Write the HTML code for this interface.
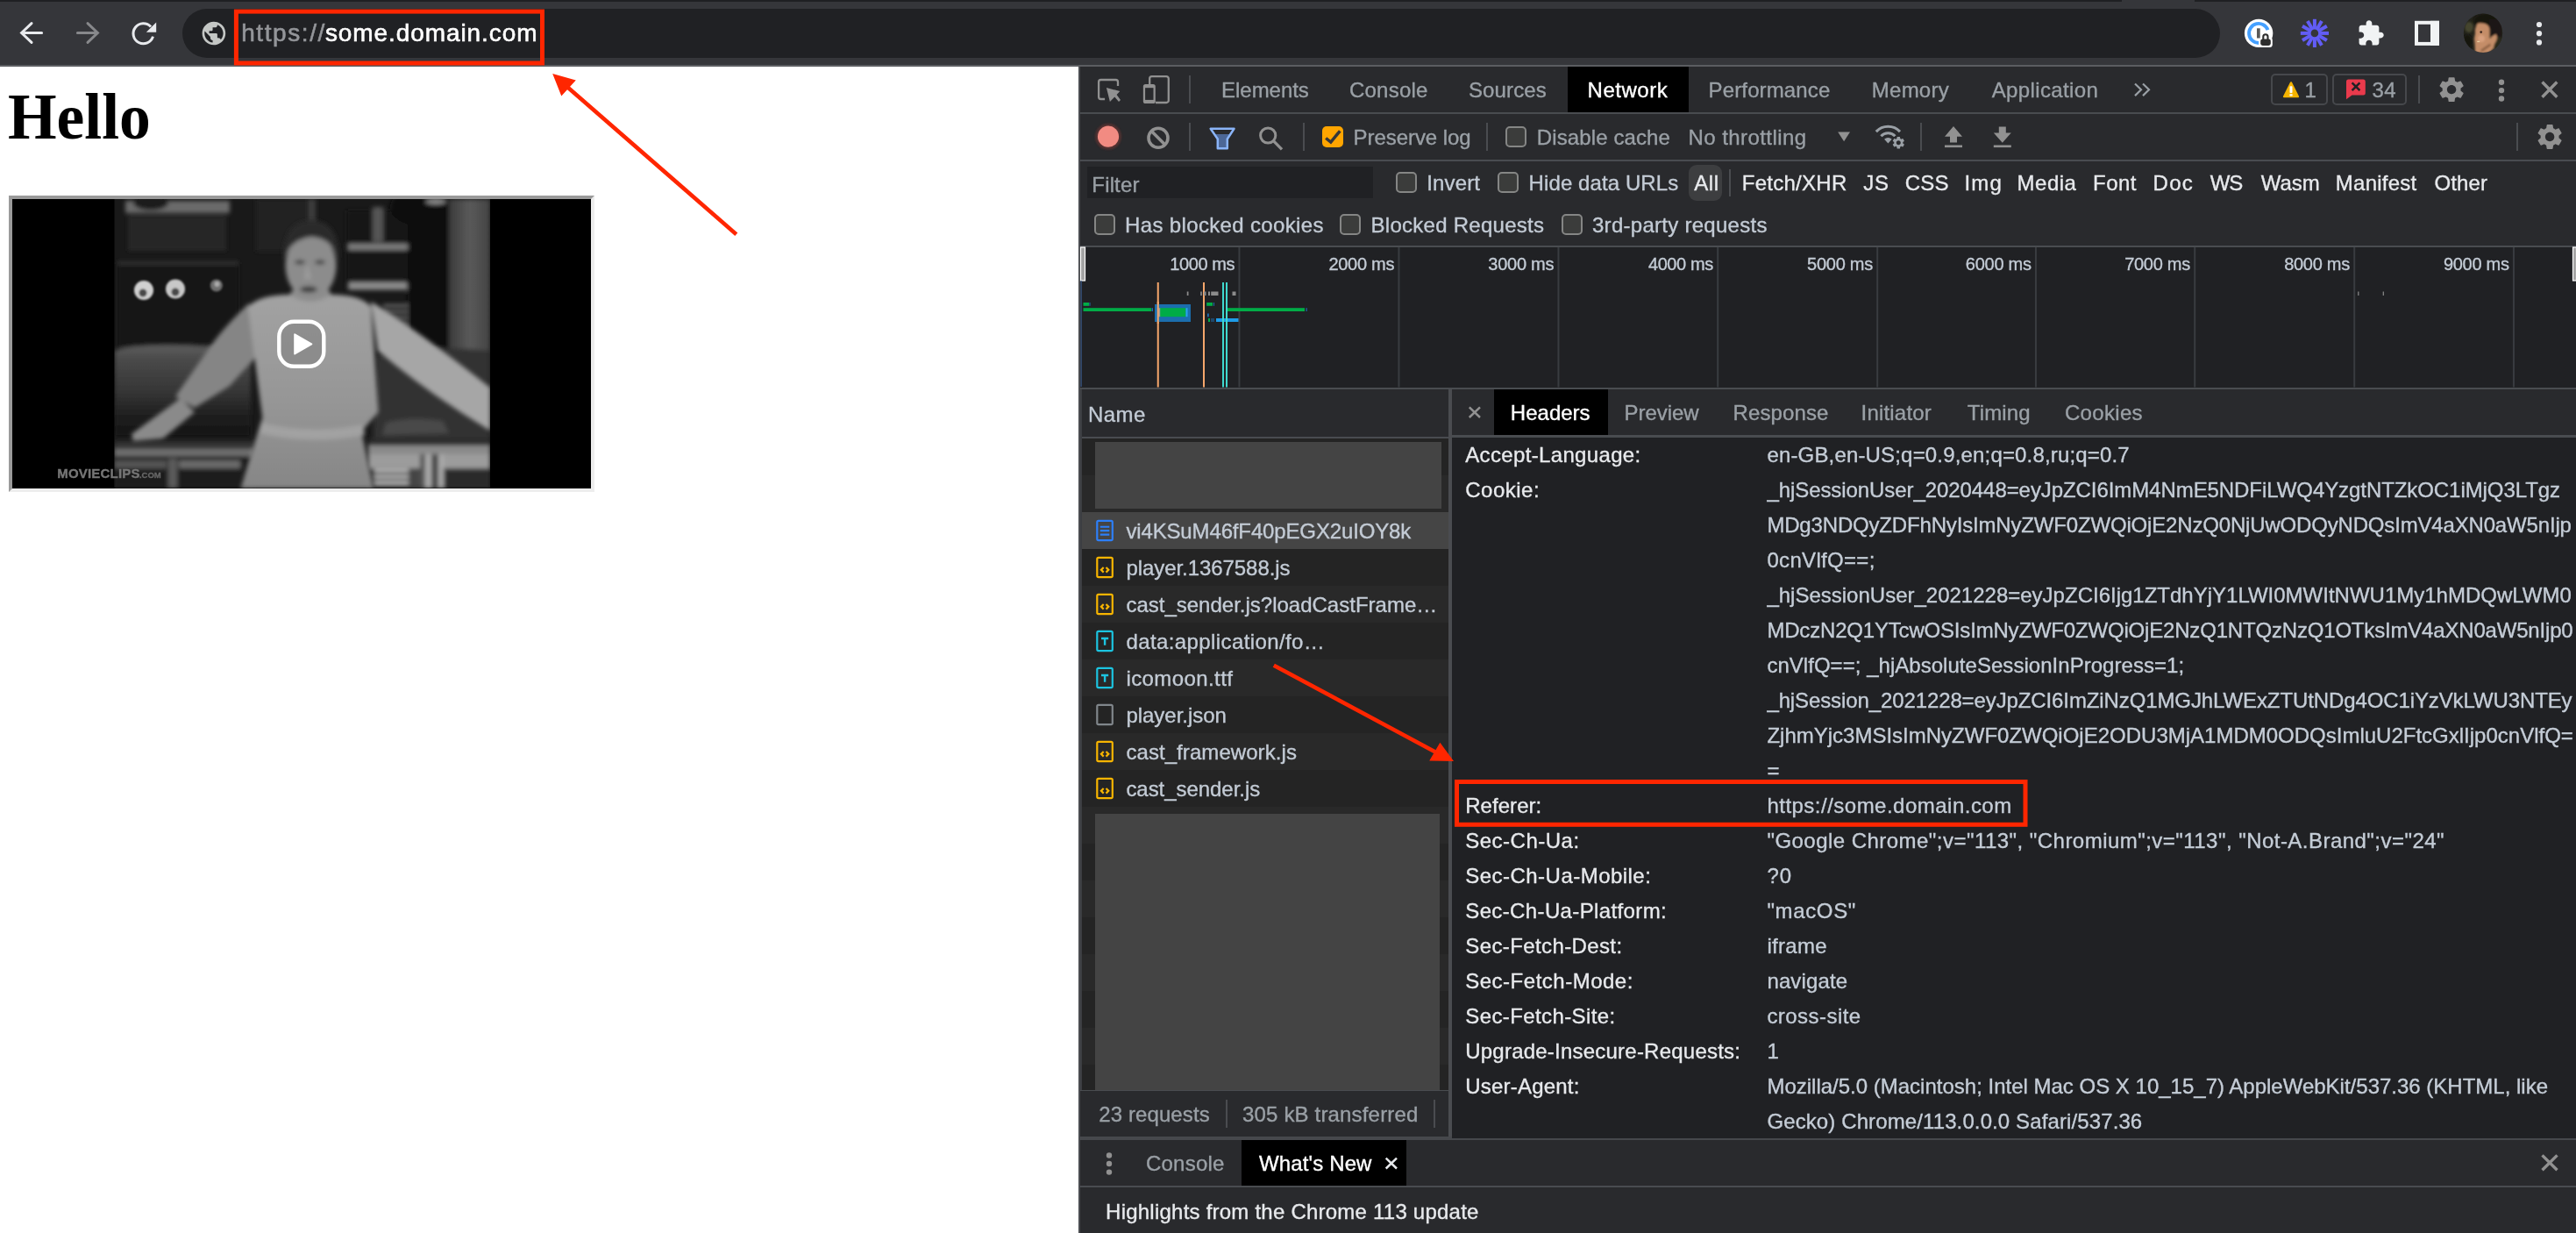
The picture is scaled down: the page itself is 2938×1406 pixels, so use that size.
<!DOCTYPE html>
<html lang="en"><head><meta charset="utf-8"><title>some.domain.com - DevTools Network</title>
<style>
*{box-sizing:border-box}
html,body{margin:0;padding:0}
body{width:2938px;height:1406px;overflow:hidden;position:relative;background:#202124;font-family:'Liberation Sans',Arial,sans-serif}
.t{position:absolute;white-space:pre;display:block}
#labels{position:absolute;left:0;top:0;width:2938px;height:1406px;will-change:transform}
.ff-s{font-family:'Liberation Sans',Arial,sans-serif;-webkit-text-stroke:0.35px currentColor}
.ff-r{font-family:'Liberation Serif','Times New Roman',serif}
.r{position:absolute}
svg{position:absolute;left:0;top:0;overflow:visible}
.cb{position:absolute;width:24px;height:24px;border:2px solid #858685;border-radius:5px;background:#3b3c3b}
.sep{position:absolute;width:2px;background:#4a4c50}
</style></head>
<body>
<header id="toolbar">
<div class="r" style="left:0px;top:0px;width:2938px;height:2px;background:#1f2023;"></div>
<div class="r" style="left:0px;top:2px;width:2938px;height:72px;background:#35363a;"></div>
<div class="r" style="left:2420px;top:0px;width:83px;height:2px;background:#35363a;"></div>
<div class="r" style="left:0px;top:74px;width:2938px;height:2px;background:#5b5d61;"></div>
<div class="r" style="left:208px;top:10px;width:2324px;height:56px;background:#202124;border-radius:28px"></div>
</header>
<main id="page">
<div class="r" style="left:0px;top:76px;width:1230px;height:1330px;background:#ffffff;"></div>
<div class="r" id="frame" style="left:10px;top:223px;width:667.5px;height:337.5px;background:#000;border-style:solid;border-width:4px;border-color:#9a9a9a #ededed #ededed #9a9a9a"></div>
</main>
<aside id="devtools">
<div class="r" style="left:1230px;top:76px;width:2px;height:1330px;background:#4a4c50;"></div>
<div class="r" style="left:1232px;top:76px;width:1706px;height:52px;background:#292a2d;"></div>
<div class="r" style="left:1788px;top:76px;width:138px;height:52px;background:#000;"></div>
<div class="r" style="left:1232px;top:128px;width:1706px;height:2px;background:#494c50;"></div>
<div class="r" style="left:1232px;top:130px;width:1706px;height:52px;background:#292a2d;"></div>
<div class="r" style="left:1232px;top:182px;width:1706px;height:2px;background:#494c50;"></div>
<div class="r" style="left:1232px;top:184px;width:1706px;height:96px;background:#292a2d;"></div>
<div class="r" style="left:1240px;top:190px;width:326px;height:36px;background:#202124;"></div>
<div class="r" style="left:1926px;top:188px;width:38px;height:41px;background:#3d3e40;border-radius:9px"></div>
<div class="r" style="left:1232px;top:280px;width:1706px;height:2px;background:#494c50;"></div>
<div class="r" style="left:1232px;top:282px;width:1706px;height:160px;background:#202124;"></div>
<div class="r" style="left:1232px;top:441.5px;width:1706px;height:2.5px;background:#494c50;"></div>
<div class="r" style="left:1232px;top:444px;width:420px;height:54px;background:#292a2d;"></div>
<div class="r" style="left:1232px;top:497.7px;width:420px;height:2.3px;background:#494c50;"></div>
<div class="r" style="left:1232px;top:499.75px;width:420px;height:42px;background:#242424;"></div>
<div class="r" style="left:1232px;top:541.75px;width:420px;height:42px;background:#292929;"></div>
<div class="r" style="left:1232px;top:583.75px;width:420px;height:42px;background:#454545;"></div>
<div class="r" style="left:1232px;top:625.75px;width:420px;height:42px;background:#242424;"></div>
<div class="r" style="left:1232px;top:667.75px;width:420px;height:42px;background:#292929;"></div>
<div class="r" style="left:1232px;top:709.75px;width:420px;height:42px;background:#242424;"></div>
<div class="r" style="left:1232px;top:751.75px;width:420px;height:42px;background:#292929;"></div>
<div class="r" style="left:1232px;top:793.75px;width:420px;height:42px;background:#242424;"></div>
<div class="r" style="left:1232px;top:835.75px;width:420px;height:42px;background:#292929;"></div>
<div class="r" style="left:1232px;top:877.75px;width:420px;height:42px;background:#242424;"></div>
<div class="r" style="left:1232px;top:919.75px;width:420px;height:42px;background:#292929;"></div>
<div class="r" style="left:1232px;top:961.75px;width:420px;height:42px;background:#242424;"></div>
<div class="r" style="left:1232px;top:1003.75px;width:420px;height:42px;background:#292929;"></div>
<div class="r" style="left:1232px;top:1045.75px;width:420px;height:42px;background:#242424;"></div>
<div class="r" style="left:1232px;top:1087.75px;width:420px;height:42px;background:#292929;"></div>
<div class="r" style="left:1232px;top:1129.75px;width:420px;height:42px;background:#242424;"></div>
<div class="r" style="left:1232px;top:1171.75px;width:420px;height:42px;background:#292929;"></div>
<div class="r" style="left:1232px;top:1213.75px;width:420px;height:28.75px;background:#242424;"></div>
<div class="r" style="left:1232px;top:444px;width:2px;height:799px;background:#3c3e42;"></div>
<div class="r" style="left:1249px;top:504px;width:394.75px;height:75.7px;background:#444444;"></div>
<div class="r" style="left:1249px;top:927.5px;width:393px;height:317px;background:#444444;"></div>
<div class="r" style="left:1232px;top:1242.5px;width:420px;height:1.8px;background:#494c50;"></div>
<div class="r" style="left:1232px;top:1244.3px;width:420px;height:51.5px;background:#292a2d;"></div>
<div class="r" style="left:1652px;top:444px;width:4.2px;height:854px;background:#4a4c50;"></div>
<div class="r" style="left:1656.2px;top:444px;width:1281.8px;height:52.2px;background:#292a2d;"></div>
<div class="r" style="left:1704px;top:444px;width:130px;height:52.2px;background:#000;"></div>
<div class="r" style="left:1656.2px;top:496.2px;width:1281.8px;height:2.5px;background:#494c50;"></div>
<div class="r" style="left:1656.2px;top:498.7px;width:1281.8px;height:799px;background:#202124;"></div>
<div class="r" style="left:1232px;top:1295.8px;width:424px;height:4.2px;background:#46484c;"></div>
<div class="r" style="left:1656px;top:1297.6px;width:1282px;height:2.4px;background:#46484c;"></div>
<div class="r" style="left:1232px;top:1300px;width:1706px;height:52px;background:#292a2d;"></div>
<div class="r" style="left:1415.75px;top:1300px;width:188px;height:52px;background:#000;"></div>
<div class="r" style="left:1232px;top:1351.8px;width:1706px;height:2px;background:#494c50;"></div>
<div class="r" style="left:1232px;top:1353.8px;width:1706px;height:53px;background:#292a2d;"></div>
<div class="sep" style="left:1356px;top:86px;height:31.6px"></div>
<div class="sep" style="left:2758px;top:86px;height:31.6px"></div>
<div class="sep" style="left:1356px;top:140.2px;height:31.4px"></div>
<div class="sep" style="left:1486px;top:140.2px;height:31.4px"></div>
<div class="sep" style="left:1695px;top:140.2px;height:31.4px"></div>
<div class="sep" style="left:2190.3px;top:140.2px;height:31.4px"></div>
<div class="sep" style="left:2870px;top:140.2px;height:31.4px"></div>
<div class="sep" style="left:1972px;top:192.5px;height:31.3px"></div>
<div class="sep" style="left:1397.8px;top:1254px;height:31.5px"></div>
<div class="sep" style="left:1634.8px;top:1254px;height:31.5px"></div>
<div class="cb" style="left:1717px;top:144.3px"></div>
<div class="cb" style="left:1592px;top:196.3px"></div>
<div class="cb" style="left:1708px;top:196.3px"></div>
<div class="cb" style="left:1248px;top:244.2px"></div>
<div class="cb" style="left:1528px;top:244.2px"></div>
<div class="cb" style="left:1781.2px;top:244.2px"></div>
<div class="r" style="left:1508px;top:144px;width:24.4px;height:24.4px;background:#ffa500;border-radius:5px"></div>
<div class="r" style="left:2590.3px;top:84.3px;width:65px;height:36.2px;border:2px solid #46484c;border-radius:5px"></div>
<div class="r" style="left:2660.3px;top:84.3px;width:85px;height:36.2px;border:2px solid #46484c;border-radius:5px"></div>
</aside>
<svg id="gfx" width="2938" height="1406" viewBox="0 0 2938 1406">
<g id="nav" fill="none" stroke-width="3" stroke-linecap="round" stroke-linejoin="miter"><path stroke="#e8eaed" d="M47.6 37.5H25M36 26.6L24.6 37.5L36 48.4"/><path stroke="#87888b" d="M88.4 37.5H111M100 26.6L111.4 37.5L100 48.4"/><path stroke="#e8eaed" stroke-linecap="butt" d="M172.05 30.6A11.5 11.5 0 1 0 174.5 41.66"/></g>
<path fill="#e8eaed" d="M178.2 25.4V36.8H166.8Z"/>
<path fill="#c4c7c5" transform="translate(227.94,22.04) scale(1.33)" d="M12 2C6.48 2 2 6.48 2 12s4.48 10 10 10 10-4.48 10-10S17.52 2 12 2zm-1 17.93c-3.95-.49-7-3.85-7-7.93 0-.62.08-1.21.21-1.79L9 15v1c0 1.1.9 2 2 2v1.93zm6.9-2.54c-.26-.81-1-1.39-1.9-1.39h-1v-3c0-.55-.45-1-1-1H8v-2h2c.55 0 1-.45 1-1V7h2c1.1 0 2-.9 2-2v-.41c2.93 1.19 5 4.06 5 7.41 0 2.08-.8 3.97-2.1 5.39z"/>
<g id="onepw"><circle cx="2576.1" cy="37.9" r="16.2" fill="#fff"/><rect x="2576.4" y="42.6" width="15.4" height="11.4" rx="3.5" fill="#fff"/><path d="M2576.1 48.95A11.05 11.05 0 1 1 2586.5 34.1" fill="none" stroke="#45a0ff" stroke-width="3.9"/><rect x="2574" y="32.3" width="3.7" height="11.2" fill="#5a5a5a"/><path d="M2581.3 45.5V41.8a2.6 2.6 0 0 1 5.2 0V45.5" fill="none" stroke="#fff" stroke-width="5"/><path d="M2581.3 45.5V41.8a2.6 2.6 0 0 1 5.2 0V45.5" fill="none" stroke="#2d2d2d" stroke-width="2.1"/><rect x="2578.2" y="44.4" width="11.6" height="7.6" rx="2.4" fill="#2d2d2d"/></g>
<g id="loom" transform="translate(2639.9,37.9)" fill="#625df5"><rect x="-2" y="-16.1" width="4" height="11" transform="rotate(0)"/><rect x="-2" y="-16.1" width="4" height="11" transform="rotate(30)"/><rect x="-2" y="-16.1" width="4" height="11" transform="rotate(60)"/><rect x="-2" y="-16.1" width="4" height="11" transform="rotate(90)"/><rect x="-2" y="-16.1" width="4" height="11" transform="rotate(120)"/><rect x="-2" y="-16.1" width="4" height="11" transform="rotate(150)"/><rect x="-2" y="-16.1" width="4" height="11" transform="rotate(180)"/><rect x="-2" y="-16.1" width="4" height="11" transform="rotate(210)"/><rect x="-2" y="-16.1" width="4" height="11" transform="rotate(240)"/><rect x="-2" y="-16.1" width="4" height="11" transform="rotate(270)"/><rect x="-2" y="-16.1" width="4" height="11" transform="rotate(300)"/><rect x="-2" y="-16.1" width="4" height="11" transform="rotate(330)"/><circle r="5.3" fill="none" stroke="#625df5" stroke-width="2"/></g>
<path fill="#f1f3f4" transform="translate(2687.9,21.96) scale(1.34)" d="M20.5 11H19V7c0-1.1-.9-2-2-2h-4V3.5C13 2.12 11.88 1 10.5 1S8 2.12 8 3.5V5H4c-1.1 0-1.99.9-1.99 2v3.8H3.5c1.49 0 2.7 1.21 2.7 2.7s-1.21 2.7-2.7 2.7H2V20c0 1.1.9 2 2 2h3.8v-1.5c0-1.49 1.21-2.7 2.7-2.7 1.49 0 2.7 1.21 2.7 2.7V22H17c1.1 0 2-.9 2-2v-4h1.5c1.38 0 2.5-1.12 2.5-2.5S21.88 11 20.5 11z"/>
<rect x="2756" y="25.8" width="24" height="24.1" fill="none" stroke="#f1f3f4" stroke-width="4"/><rect x="2772" y="23.8" width="10" height="28.1" fill="#f1f3f4"/>
<defs><clipPath id="avc"><circle cx="2832" cy="37.8" r="22.2"/></clipPath><filter id="b1" x="-20%" y="-20%" width="140%" height="140%"><feGaussianBlur stdDeviation="0.9"/></filter></defs><g clip-path="url(#avc)"><rect x="2808" y="14" width="48" height="48" fill="#23231a"/><g filter="url(#b1)"><ellipse cx="2816" cy="31" rx="5" ry="6" fill="#45452f"/><ellipse cx="2814" cy="48" rx="6" ry="9" fill="#121210"/><ellipse cx="2836" cy="24" rx="15" ry="9" fill="#16150f"/><rect x="2839" y="22" width="14" height="20" fill="#1a1712"/><ellipse cx="2849" cy="50" rx="6" ry="8" fill="#2b2a1c"/><path d="M2826 26.500Q2838 25 2839.500 33L2839.500 44Q2844 39.500 2847 39Q2849.500 44 2845 50L2843.500 56L2838 61L2823 61L2822.500 50Q2821 44 2823 38Q2822 32 2826 26.500Z" fill="#c48d68"/><ellipse cx="2830" cy="44" rx="4" ry="4" fill="#d8a07e"/><path d="M2829 57L2840 49.500L2841 52L2831 59Z" fill="#8e6244"/></g><circle cx="2829.700" cy="36.600" r="1.300" fill="#3a241c"/><rect x="2825.200" y="46.800" width="3" height="1.300" fill="#e8cfa0"/></g>
<g fill="#e8eaed"><circle cx="2896" cy="28" r="3.1"/><circle cx="2896" cy="38.2" r="3.1"/><circle cx="2896" cy="48.4" r="3.1"/></g>
<g id="dt-icons" fill="none" stroke="#919191" stroke-width="2.3"><path d="M1260.1 113H1255.6a2.5 2.5 0 0 1-2.5-2.5V93.500a2.500 2.500 0 0 1 2.500-2.500H1272.500a2.500 2.500 0 0 1 2.500 2.500V98.100"/><path d="M1311.200 96V89.600a2.500 2.500 0 0 1 2.500-2.500H1330.300a2.500 2.500 0 0 1 2.500 2.500V114.500a2.500 2.500 0 0 1-2.500 2.500H1318"/></g>
<path fill="#919191" d="M1261.900 99.900L1277.300 104.100L1273.600 108L1278 114L1276 116L1271.300 110.600L1265.900 116Z"/>
<rect x="1303.850" y="96" width="13.950" height="22.100" rx="2.600" fill="#919191"/><rect x="1306.100" y="100.200" width="9.400" height="13.700" fill="#292a2d"/>
<path d="M2435 95.5l7 6.8-7 6.8M2444 95.5l7 6.8-7 6.8" fill="none" stroke="#9aa0a6" stroke-width="2.2"/>
<path d="M2613 94.3L2621 110.2H2605Z" fill="#f5b400" stroke="#f5b400" stroke-width="2.2" stroke-linejoin="round"/><rect x="2611.500" y="98.200" width="3" height="7.800" rx=".800" fill="#fff"/><rect x="2611.300" y="107.300" width="3.400" height="2.100" rx=".600" fill="#fff"/>
<path d="M2678.5 90.5H2695.3a2.5 2.5 0 0 1 2.5 2.5V106a2.5 2.5 0 0 1-2.5 2.5H2682.5L2676 113.2V93a2.5 2.5 0 0 1 2.5-2.5Z" fill="#ea3a4c"/><path d="M2682.6 94.4l8.8 8.8M2691.400 94.4l-8.8 8.8" stroke="#202124" stroke-width="2.5" fill="none"/>
<path fill="#919191" transform="translate(2778.70,84.70) scale(1.45)" d="M19.14 12.94c.04-.3.06-.61.06-.94 0-.32-.02-.64-.07-.94l2.03-1.58c.18-.14.23-.41.12-.61l-1.92-3.32c-.12-.22-.37-.29-.59-.22l-2.39.96c-.5-.38-1.03-.7-1.62-.94l-.36-2.54c-.04-.24-.24-.41-.48-.41h-3.84c-.24 0-.43.17-.47.41l-.36 2.54c-.59.24-1.13.57-1.62.94l-2.39-.96c-.22-.08-.47 0-.59.22L2.74 8.87c-.12.21-.08.47.12.61l2.03 1.58c-.05.3-.09.63-.09.94s.02.64.07.94l-2.03 1.58c-.18.14-.23.41-.12.61l1.92 3.32c.12.22.37.29.59.22l2.39-.96c.5.38 1.03.7 1.62.94l.36 2.54c.05.24.24.41.48.41h3.84c.24 0 .44-.17.47-.41l.36-2.54c.59-.24 1.13-.56 1.62-.94l2.39.96c.22.08.47 0 .59-.22l1.92-3.32c.12-.22.07-.47-.12-.61l-2.01-1.58zM12 15.6c-1.98 0-3.6-1.62-3.6-3.6s1.62-3.6 3.6-3.6 3.6 1.62 3.6 3.6-1.62 3.6-3.6 3.6z"/>
<path fill="#919191" transform="translate(2890.70,138.60) scale(1.45)" d="M19.14 12.94c.04-.3.06-.61.06-.94 0-.32-.02-.64-.07-.94l2.03-1.58c.18-.14.23-.41.12-.61l-1.92-3.32c-.12-.22-.37-.29-.59-.22l-2.39.96c-.5-.38-1.03-.7-1.62-.94l-.36-2.54c-.04-.24-.24-.41-.48-.41h-3.84c-.24 0-.43.17-.47.41l-.36 2.54c-.59.24-1.13.57-1.62.94l-2.39-.96c-.22-.08-.47 0-.59.22L2.74 8.87c-.12.21-.08.47.12.61l2.03 1.58c-.05.3-.09.63-.09.94s.02.64.07.94l-2.03 1.58c-.18.14-.23.41-.12.61l1.92 3.32c.12.22.37.29.59.22l2.39-.96c.5.38 1.03.7 1.62.94l.36 2.54c.05.24.24.41.48.41h3.84c.24 0 .44-.17.47-.41l.36-2.54c.59-.24 1.13-.56 1.62-.94l2.39.96c.22.08.47 0 .59-.22l1.92-3.32c.12-.22.07-.47-.12-.61l-2.01-1.58zM12 15.6c-1.98 0-3.6-1.62-3.6-3.6s1.62-3.6 3.6-3.6 3.6 1.62 3.6 3.6-1.62 3.6-3.6 3.6z"/>
<g fill="#919191"><circle cx="2853" cy="93.75" r="3.2"/><circle cx="2853" cy="103.1" r="3.2"/><circle cx="2853" cy="112.5" r="3.2"/><circle cx="1265" cy="1317.5" r="3.2"/><circle cx="1265" cy="1327" r="3.2"/><circle cx="1265" cy="1336.6" r="3.2"/></g>
<g fill="none" stroke="#919191" stroke-width="3.4"><path d="M2899.5 93.5L2916.3 110.700M2916.3 93.5L2899.5 110.700"/><path d="M2899.5 1317.4L2916.5 1334.2M2916.5 1317.4L2899.5 1334.2"/><path stroke-width="2.5" d="M1675.8 464.3L1688 476M1688 464.3L1675.8 476"/></g>
<path d="M1580.7 1320.700L1593 1332.5M1593 1320.700L1580.700 1332.5" fill="none" stroke="#e8eaed" stroke-width="2.5"/>
<defs><filter id="b2" x="-50%" y="-50%" width="200%" height="200%"><feGaussianBlur stdDeviation="0.9"/></filter></defs>
<circle cx="1264" cy="155.7" r="14.8" fill="#5a3230" opacity=".9" filter="url(#b2)"/><circle cx="1264" cy="155.7" r="12.1" fill="#f28b82"/>
<g fill="none" stroke="#919191"><circle cx="1321" cy="157.2" r="11" stroke-width="3.6"/><path stroke-width="3.6" d="M1313 149.2L1329 165.2"/><circle cx="1446.2" cy="154.5" r="8.6" stroke-width="3"/><path stroke-width="3.3" d="M1452.4 160.700L1462 170.300"/></g>
<path d="M1384.5 153H1403.700L1399.800 158.500V169.300H1388.800V158.500Z" fill="#4c6796"/><path d="M1380.700 146.800H1407.500L1399.800 158.500V169.300H1388.800V158.500Z" fill="none" stroke="#8ab4f8" stroke-width="2.5" stroke-linejoin="round"/>
<path d="M1512.2 157.5L1517.800 162.100L1528.300 149.300" fill="none" stroke="#35363a" stroke-width="3.5"/>
<path d="M2096.2 150.5H2110L2103.100 161.300Z" fill="#919191"/>
<g fill="none" stroke="#9aa0a6" stroke-width="3.1"><path d="M2139.80 150.11A18.6 18.6 0 0 1 2167.00 150.11"/><path d="M2145.36 155.30A11 11 0 0 1 2161.44 155.30"/></g><path d="M2149.10 158.80a6 6 0 0 1 8.600 0l-4.300 4.600z" fill="#9aa0a6"/><circle cx="2165.300" cy="162.750" r="8.300" fill="#292a2d"/><path fill="#9aa0a6" transform="translate(2156.90,154.35) scale(.7)" d="M19.14 12.94c.04-.3.06-.61.06-.94 0-.32-.02-.64-.07-.94l2.03-1.58c.18-.14.23-.41.12-.61l-1.92-3.32c-.12-.22-.37-.29-.59-.22l-2.39.96c-.5-.38-1.03-.7-1.62-.94l-.36-2.54c-.04-.24-.24-.41-.48-.41h-3.84c-.24 0-.43.17-.47.41l-.36 2.54c-.59.24-1.13.57-1.62.94l-2.39-.96c-.22-.08-.47 0-.59.22L2.74 8.87c-.12.21-.08.47.12.61l2.03 1.58c-.05.3-.09.63-.09.94s.02.64.07.94l-2.03 1.58c-.18.14-.23.41-.12.61l1.92 3.32c.12.22.37.29.59.22l2.39-.96c.5.38 1.03.7 1.62.94l.36 2.54c.05.24.24.41.48.41h3.84c.24 0 .44-.17.47-.41l.36-2.54c.59-.24 1.13-.56 1.62-.94l2.39.96c.22.08.47 0 .59-.22l1.92-3.32c.12-.22.07-.47-.12-.61l-2.01-1.58zM12 15.6c-1.98 0-3.6-1.62-3.6-3.6s1.62-3.6 3.6-3.6 3.6 1.62 3.6 3.6-1.62 3.6-3.6 3.6z"/>
<g fill="#919191"><path d="M2228 144L2238 155.800H2232V162.600H2224V155.800H2218Z"/><rect x="2218" y="165.500" width="20" height="2.600"/><path d="M2279.800 144.600H2287.800V151.600H2293.800L2283.800 162.800L2273.800 151.600H2279.800Z"/><rect x="2273.800" y="165.500" width="20" height="2.600"/></g>
<g id="overview"><rect x="1412.45" y="282" width="2" height="159.500" fill="#393c40"/><rect x="1594.45" y="282" width="2" height="159.500" fill="#393c40"/><rect x="1776.45" y="282" width="2" height="159.500" fill="#393c40"/><rect x="1958.20" y="282" width="2" height="159.500" fill="#393c40"/><rect x="2140.20" y="282" width="2" height="159.500" fill="#393c40"/><rect x="2320.95" y="282" width="2" height="159.500" fill="#393c40"/><rect x="2502.20" y="282" width="2" height="159.500" fill="#393c40"/><rect x="2684.20" y="282" width="2" height="159.500" fill="#393c40"/><rect x="2865.95" y="282" width="2" height="159.500" fill="#393c40"/>
<rect x="1232.500" y="282" width="5" height="38" fill="#a2a2a2" stroke="#fff" stroke-width="1.2"/><rect x="2934.500" y="282" width="4" height="38" fill="#a2a2a2" stroke="#fff" stroke-width="1.2"/>
<rect x="1232.5" y="320" width="1.2" height="121" fill="#3b5a8a"/>
<rect x="1319.75" y="322" width="2" height="119.500" fill="#f5a66b"/>
<rect x="1372" y="322" width="2" height="119.500" fill="#f5a66b"/>
<rect x="1394" y="322" width="2" height="119.500" fill="#3fd9cf"/>
<rect x="1398" y="322" width="2" height="119.500" fill="#3fd9cf"/>
<rect x="1353.75" y="332.500" width="1.75" height="4.500" fill="#8c8c8c"/>
<rect x="1369.2" y="332.500" width="1.60" height="4.500" fill="#8c8c8c"/>
<rect x="1373" y="332.500" width="2.50" height="4.500" fill="#8c8c8c"/>
<rect x="1378" y="332.500" width="2.00" height="4.500" fill="#8c8c8c"/>
<rect x="1381.2" y="332.500" width="8.30" height="4.500" fill="#8c8c8c"/>
<rect x="1405.5" y="332.500" width="4.00" height="4.500" fill="#8c8c8c"/>
<rect x="2689.2" y="332.500" width="1.20" height="4.500" fill="#8c8c8c"/>
<rect x="2717.7" y="332.500" width="1.20" height="4.500" fill="#8c8c8c"/>
<rect x="1235.5" y="345" width="6.500" height="3.800" fill="#00ac47"/><rect x="1242.500" y="345" width="1" height="3.800" fill="#1f6fb0"/><rect x="1235.5" y="351.200" width="77.500" height="3.800" fill="#00ac47"/><rect x="1313.500" y="351.200" width="1.500" height="3.800" fill="#1f6fb0"/><rect x="1317" y="347" width="41" height="20" fill="#1b6eae"/><rect x="1323" y="351.200" width="29.500" height="10" fill="#00ac47"/><rect x="1352.500" y="351.200" width="2" height="10" fill="#29a4ef"/><rect x="1321.200" y="351.200" width="2" height="10" fill="#9b9b9b"/><rect x="1376.200" y="345" width="6.800" height="3.800" fill="#00ac47"/><rect x="1384" y="345" width="1" height="3.800" fill="#1f6fb0"/><rect x="1400" y="351.200" width="88" height="3.800" fill="#00ac47"/><rect x="1489.500" y="351.200" width="1.200" height="3.800" fill="#1f6fb0"/><rect x="1377" y="357.500" width="1.800" height="3.800" fill="#1f6fb0"/><rect x="1378" y="363" width="2" height="4" fill="#00ac47"/><rect x="1381.500" y="363" width="1" height="4" fill="#1f6fb0"/><rect x="1383.500" y="363" width="1" height="4" fill="#1f6fb0"/><rect x="1387" y="363" width="25.500" height="4" fill="#1e9ce8"/>
<rect x="1319.75" y="344" width="2" height="25" fill="#f5a66b"/>
<rect x="1372" y="344" width="2" height="25" fill="#f5a66b"/>
<rect x="1394" y="344" width="2" height="25" fill="#3fd9cf"/>
<rect x="1398" y="344" width="2" height="25" fill="#3fd9cf"/>
</g>
<g fill="none" stroke="#2d7ff9" stroke-width="2.2"><rect x="1251.300" y="593.85" width="17.500" height="22.300" rx="1.600"/><path d="M1254.800 600.75H1265.300M1254.800 605.15H1265.300M1254.800 609.55H1265.300"/></g>
<g fill="none" stroke="#f8b500" stroke-width="2.2"><rect x="1251.300" y="635.85" width="17.500" height="22.300" rx="1.600"/><path stroke-width="2.200" d="M1258.700 647.05l-2.800 2.800 2.800 2.800M1261.500 647.05l2.800 2.800-2.800 2.800"/></g>
<g fill="none" stroke="#f8b500" stroke-width="2.2"><rect x="1251.300" y="677.85" width="17.500" height="22.300" rx="1.600"/><path stroke-width="2.200" d="M1258.700 689.05l-2.800 2.800 2.800 2.800M1261.500 689.05l2.800 2.800-2.800 2.800"/></g>
<g fill="none" stroke="#1cc4e0" stroke-width="2.2"><rect x="1251.300" y="719.85" width="17.500" height="22.300" rx="1.600"/><path stroke-width="2.400" d="M1256 727.95H1264.200M1260.100 727.95V735.75"/></g>
<g fill="none" stroke="#1cc4e0" stroke-width="2.2"><rect x="1251.300" y="761.85" width="17.500" height="22.300" rx="1.600"/><path stroke-width="2.400" d="M1256 769.95H1264.200M1260.100 769.95V777.75"/></g>
<g fill="none" stroke="#80868b" stroke-width="2.2"><rect x="1251.300" y="803.85" width="17.500" height="22.300" rx="1.600"/></g>
<g fill="none" stroke="#f8b500" stroke-width="2.2"><rect x="1251.300" y="845.85" width="17.500" height="22.300" rx="1.600"/><path stroke-width="2.200" d="M1258.700 857.05l-2.800 2.800 2.800 2.800M1261.500 857.05l2.800 2.800-2.800 2.800"/></g>
<g fill="none" stroke="#f8b500" stroke-width="2.2"><rect x="1251.300" y="887.85" width="17.500" height="22.300" rx="1.600"/><path stroke-width="2.200" d="M1258.700 899.05l-2.800 2.800 2.800 2.800M1261.500 899.05l2.800 2.800-2.800 2.800"/></g>
<defs><clipPath id="vc"><rect x="130.5" y="227" width="428.5" height="329.5"/></clipPath>
<filter id="b3" x="-10%" y="-10%" width="120%" height="120%"><feGaussianBlur stdDeviation="2.4"/></filter>
<filter id="b4" x="-10%" y="-10%" width="120%" height="120%"><feGaussianBlur stdDeviation="1.3"/></filter>
<filter id="b5" x="-10%" y="-10%" width="120%" height="120%"><feGaussianBlur stdDeviation="5"/></filter>
<linearGradient id="gown" x1="0" y1="0" x2="0" y2="1"><stop offset="0" stop-color="#a2a2a2"/><stop offset=".55" stop-color="#969696"/><stop offset="1" stop-color="#868686"/></linearGradient>
<linearGradient id="curt" x1="0" y1="0" x2="1" y2="0"><stop offset="0" stop-color="#3a3a3a"/><stop offset=".5" stop-color="#5a5a5a"/><stop offset="1" stop-color="#444"/></linearGradient>
<linearGradient id="mound" x1="0" y1="0" x2="0" y2="1"><stop offset="0" stop-color="#5e5e5e"/><stop offset=".15" stop-color="#4a4a4a"/><stop offset=".5" stop-color="#363636"/><stop offset=".8" stop-color="#1c1c1c"/><stop offset="1" stop-color="#161616"/></linearGradient></defs>
<g id="thumb" clip-path="url(#vc)">
<rect x="130" y="227" width="430" height="330" fill="#191919"/>
<g filter="url(#b3)">
<rect x="143" y="229" width="119" height="14" fill="#6a6a6a"/><ellipse cx="172" cy="231" rx="20" ry="9" fill="#1c1c1c"/>
<rect x="146" y="246" width="112" height="40" fill="#252525"/>
<rect x="134" y="300" width="138" height="96" fill="#161616"/><rect x="134" y="298" width="138" height="4" fill="#303030"/>
<rect x="292" y="227" width="60" height="60" fill="#242424"/>
<rect x="352" y="227" width="8" height="40" fill="#3c3c3c"/>
<rect x="395" y="240" width="70" height="90" fill="#141414"/>
<rect x="397" y="278" width="68" height="7" fill="#7c7c7c"/><rect x="398" y="322" width="66" height="8.500" fill="#8c8c8c"/>
<rect x="425" y="236" width="12" height="40" fill="#555"/>
<path d="M437 347h39v3h-39zM437 354h39v3h-39zM437 361h39v3h-39zM437 368h39v3h-39zM437 375h39v3h-39zM437 382h39v3h-39z" fill="#767676"/>
<ellipse cx="482" cy="236" rx="37" ry="22" fill="#0c0c0c"/><ellipse cx="497" cy="230" rx="12" ry="3" fill="#8a8a8a"/>
<rect x="465" y="250" width="48" height="170" fill="#0d0d0d"/>
<rect x="512" y="227" width="47" height="190" fill="url(#curt)"/>
<path d="M130.500 400 Q150 392 215 394 L286 398 L286 498 L130.500 498Z" fill="url(#mound)"/>
<path d="M430 405 Q480 392 559 400 L559 500 L425 500Z" fill="#303030"/>
<path d="M440 482 Q470 474 505 480 L512 494 L436 496Z" fill="#484848"/>
<rect x="130" y="503" width="160" height="9" fill="#333"/><rect x="130" y="512" width="160" height="8.500" fill="#707070"/>
<rect x="130" y="520.500" width="160" height="36" fill="#1f1f1f"/>
<rect x="130" y="525" width="60" height="9" fill="#555"/><rect x="204" y="525" width="70" height="9" fill="#6a6a6a"/>
<rect x="192" y="523" width="10" height="34" fill="#5c5c5c"/>
<rect x="420" y="500" width="139" height="8" fill="#2c2c2c"/><rect x="420" y="508" width="139" height="10" fill="#8a8a8a"/>
<rect x="420" y="518" width="139" height="16" fill="#9c9c9c"/>
<rect x="420" y="534" width="139" height="23" fill="#2c2c2c"/>
<rect x="479" y="518" width="6" height="39" fill="#555"/><rect x="485" y="518" width="7" height="39" fill="#aaa"/><rect x="492" y="518" width="8" height="39" fill="#444"/><rect x="500" y="518" width="6" height="39" fill="#aaa"/>
<rect x="466" y="534" width="13" height="23" fill="#444"/>
<path d="M427 535h39v3.500h-39zM427 542h39v3.500h-39zM427 549h39v3.500h-39z" fill="#c8c8c8"/>
</g>
<g filter="url(#b4)">
<circle cx="164" cy="331" r="11" fill="#d0d0d0"/><circle cx="163" cy="334" r="4.500" fill="#4a4a4a"/>
<circle cx="200" cy="329.500" r="11" fill="#c8c8c8"/><circle cx="200" cy="333" r="4.500" fill="#4a4a4a"/>
<circle cx="246.800" cy="325.500" r="7" fill="#6e6e6e"/><circle cx="247.500" cy="324" r="3" fill="#aaa"/>
</g>
<g filter="url(#b3)">
<path d="M423 344 Q470 372 559 442 L559 491 Q490 450 431 400Z" fill="#a6a6a6"/>
<path d="M284 346 Q256 372 240 395 L200 452 L222 465 L262 440 L298 400Z" fill="#858585"/>
<path d="M206 454 L150 495 L152 503 L186 500 L222 470Z" fill="#8a8a8a"/>
<path d="M282.700 350 Q296 336 330 336 L378 336 Q412 336 423.300 350 L431.600 470 L412.300 492 L426 557 L274.400 557 L299.200 476 Z" fill="url(#gown)"/>
<path d="M298 482 Q355 496 414 484 L416 496 Q355 508 296 494Z" fill="#a2a2a2"/>
<path d="M330 336 Q354 352 378 336 L372 326 L338 326Z" fill="#8e8e8e"/>
<ellipse cx="354.500" cy="303" rx="29" ry="38" fill="#8c8c8c"/>
<path d="M323 296 Q322 252 356 251 Q388 253 387 298 Q380 272 356 270 Q332 272 323 296Z" fill="#2a2a2a"/>
<ellipse cx="352" cy="330" rx="10" ry="3.500" fill="#3a3a3a"/>
<ellipse cx="342" cy="299" rx="6" ry="2.500" fill="#3c3c3c"/><ellipse cx="365" cy="299" rx="6" ry="2.500" fill="#3c3c3c"/>
<path d="M350 300l-3 18h8z" fill="#9c9c9c"/>
</g>
</g>
<g id="play"><rect x="318.300" y="366.800" width="51" height="51" rx="17" fill="rgba(40,40,40,.13)" stroke="#fff" stroke-width="4.400"/><path d="M336.200 381.300L355.300 392.400L336.200 403.500Z" fill="#fff" stroke="#fff" stroke-width="2" stroke-linejoin="round"/></g>
</svg>
<div id="labels">
<span class="t ff-s" style="left:275.20px;top:17.00px;font-size:28px;line-height:42px;color:#94969a;letter-spacing:1.591px;-webkit-text-stroke:0.6px currentColor;">https://</span>
<span class="t ff-s" style="left:370.96px;top:17.00px;font-size:28px;line-height:42px;color:#ffffff;letter-spacing:0.910px;-webkit-text-stroke:0.6px currentColor;">some.domain.com</span>
<span class="t ff-s" style="left:1393.10px;top:85.00px;font-size:24px;line-height:36px;color:#9aa0a6;letter-spacing:-0.043px;">Elements</span>
<span class="t ff-s" style="left:1538.97px;top:85.00px;font-size:24px;line-height:36px;color:#9aa0a6;letter-spacing:0.221px;">Console</span>
<span class="t ff-s" style="left:1674.88px;top:85.00px;font-size:24px;line-height:36px;color:#9aa0a6;letter-spacing:0.153px;">Sources</span>
<span class="t ff-s" style="left:1948.60px;top:85.00px;font-size:24px;line-height:36px;color:#9aa0a6;letter-spacing:0.133px;">Performance</span>
<span class="t ff-s" style="left:2134.85px;top:85.00px;font-size:24px;line-height:36px;color:#9aa0a6;letter-spacing:0.232px;">Memory</span>
<span class="t ff-s" style="left:2271.76px;top:85.00px;font-size:24px;line-height:36px;color:#9aa0a6;letter-spacing:0.361px;">Application</span>
<span class="t ff-s" style="left:1810.60px;top:85.00px;font-size:24px;line-height:36px;color:#ffffff;letter-spacing:0.513px;">Network</span>
<span class="t ff-s" style="left:2628.45px;top:85.00px;font-size:24px;line-height:36px;color:#9aa0a6;">1</span>
<span class="t ff-s" style="left:2705.50px;top:85.00px;font-size:24px;line-height:36px;color:#9aa0a6;letter-spacing:0.345px;">34</span>
<span class="t ff-s" style="left:1543.60px;top:139.00px;font-size:24px;line-height:36px;color:#9aa0a6;letter-spacing:-0.061px;">Preserve log</span>
<span class="t ff-s" style="left:1752.85px;top:139.00px;font-size:24px;line-height:36px;color:#9aa0a6;letter-spacing:0.108px;">Disable cache</span>
<span class="t ff-s" style="left:1925.60px;top:139.00px;font-size:24px;line-height:36px;color:#9aa0a6;letter-spacing:0.420px;">No throttling</span>
<span class="t ff-s" style="left:1245.35px;top:193.00px;font-size:24px;line-height:36px;color:#9aa0a6;letter-spacing:0.152px;">Filter</span>
<span class="t ff-s" style="left:1627.27px;top:191.00px;font-size:24px;line-height:36px;color:#c3cbd5;letter-spacing:0.137px;">Invert</span>
<span class="t ff-s" style="left:1743.60px;top:191.00px;font-size:24px;line-height:36px;color:#c3cbd5;letter-spacing:0.090px;">Hide data URLs</span>
<span class="t ff-s" style="left:1932.26px;top:191.00px;font-size:24px;line-height:36px;color:#e8eaed;letter-spacing:0.520px;">All</span>
<span class="t ff-s" style="left:1986.85px;top:191.00px;font-size:24px;line-height:36px;color:#e8eaed;letter-spacing:0.250px;">Fetch/XHR</span>
<span class="t ff-s" style="left:2125.30px;top:191.00px;font-size:24px;line-height:36px;color:#e8eaed;letter-spacing:0.588px;">JS</span>
<span class="t ff-s" style="left:2172.72px;top:191.00px;font-size:24px;line-height:36px;color:#e8eaed;letter-spacing:0.163px;">CSS</span>
<span class="t ff-s" style="left:2240.52px;top:191.00px;font-size:24px;line-height:36px;color:#e8eaed;letter-spacing:1.124px;">Img</span>
<span class="t ff-s" style="left:2300.60px;top:191.00px;font-size:24px;line-height:36px;color:#e8eaed;letter-spacing:0.472px;">Media</span>
<span class="t ff-s" style="left:2387.10px;top:191.00px;font-size:24px;line-height:36px;color:#e8eaed;letter-spacing:0.451px;">Font</span>
<span class="t ff-s" style="left:2455.60px;top:191.00px;font-size:24px;line-height:36px;color:#e8eaed;letter-spacing:1.233px;">Doc</span>
<span class="t ff-s" style="left:2520.76px;top:191.00px;font-size:24px;line-height:36px;color:#e8eaed;letter-spacing:-1.240px;">WS</span>
<span class="t ff-s" style="left:2578.76px;top:191.00px;font-size:24px;line-height:36px;color:#e8eaed;letter-spacing:-0.058px;">Wasm</span>
<span class="t ff-s" style="left:2663.85px;top:191.00px;font-size:24px;line-height:36px;color:#e8eaed;letter-spacing:0.244px;">Manifest</span>
<span class="t ff-s" style="left:2776.51px;top:191.00px;font-size:24px;line-height:36px;color:#e8eaed;letter-spacing:0.115px;">Other</span>
<span class="t ff-s" style="left:1283.10px;top:239.00px;font-size:24px;line-height:36px;color:#c3cbd5;letter-spacing:0.344px;">Has blocked cookies</span>
<span class="t ff-s" style="left:1563.60px;top:239.00px;font-size:24px;line-height:36px;color:#c3cbd5;letter-spacing:0.262px;">Blocked Requests</span>
<span class="t ff-s" style="left:1816.00px;top:239.00px;font-size:24px;line-height:36px;color:#c3cbd5;letter-spacing:0.273px;">3rd-party requests</span>
<span class="t ff-s" style="left:1334.36px;top:286.00px;font-size:20px;line-height:30px;color:#c3cbd5;letter-spacing:-0.424px;">1000 ms</span>
<span class="t ff-s" style="left:1515.40px;top:286.00px;font-size:20px;line-height:30px;color:#c3cbd5;letter-spacing:-0.264px;">2000 ms</span>
<span class="t ff-s" style="left:1697.35px;top:286.00px;font-size:20px;line-height:30px;color:#c3cbd5;letter-spacing:-0.256px;">3000 ms</span>
<span class="t ff-s" style="left:1879.91px;top:286.00px;font-size:20px;line-height:30px;color:#c3cbd5;letter-spacing:-0.392px;">4000 ms</span>
<span class="t ff-s" style="left:2061.11px;top:286.00px;font-size:20px;line-height:30px;color:#c3cbd5;letter-spacing:-0.258px;">5000 ms</span>
<span class="t ff-s" style="left:2241.87px;top:286.00px;font-size:20px;line-height:30px;color:#c3cbd5;letter-spacing:-0.259px;">6000 ms</span>
<span class="t ff-s" style="left:2423.14px;top:286.00px;font-size:20px;line-height:30px;color:#c3cbd5;letter-spacing:-0.262px;">7000 ms</span>
<span class="t ff-s" style="left:2605.15px;top:286.00px;font-size:20px;line-height:30px;color:#c3cbd5;letter-spacing:-0.264px;">8000 ms</span>
<span class="t ff-s" style="left:2786.90px;top:286.00px;font-size:20px;line-height:30px;color:#c3cbd5;letter-spacing:-0.263px;">9000 ms</span>
<span class="t ff-s" style="left:1241.10px;top:455.00px;font-size:24px;line-height:36px;color:#c3cbd5;letter-spacing:0.400px;">Name</span>
<span class="t ff-s" style="left:1722.85px;top:453.00px;font-size:24px;line-height:36px;color:#ffffff;letter-spacing:0.007px;">Headers</span>
<span class="t ff-s" style="left:1852.60px;top:453.00px;font-size:24px;line-height:36px;color:#9aa0a6;letter-spacing:-0.070px;">Preview</span>
<span class="t ff-s" style="left:1976.60px;top:453.00px;font-size:24px;line-height:36px;color:#9aa0a6;letter-spacing:0.100px;">Response</span>
<span class="t ff-s" style="left:2122.52px;top:453.00px;font-size:24px;line-height:36px;color:#9aa0a6;letter-spacing:0.201px;">Initiator</span>
<span class="t ff-s" style="left:2243.85px;top:453.00px;font-size:24px;line-height:36px;color:#9aa0a6;letter-spacing:0.134px;">Timing</span>
<span class="t ff-s" style="left:2354.97px;top:453.00px;font-size:24px;line-height:36px;color:#9aa0a6;letter-spacing:0.320px;">Cookies</span>
<span class="t ff-s" style="left:1284.40px;top:588.00px;font-size:24px;line-height:36px;color:#c3cbd5;letter-spacing:-0.143px;">vi4KSuM46fF40pEGX2uIOY8k</span>
<span class="t ff-s" style="left:1284.40px;top:630.00px;font-size:24px;line-height:36px;color:#c3cbd5;letter-spacing:-0.061px;">player.1367588.js</span>
<span class="t ff-s" style="left:1284.40px;top:672.00px;font-size:24px;line-height:36px;color:#c3cbd5;">cast_sender.js?loadCastFrame…</span>
<span class="t ff-s" style="left:1284.40px;top:714.00px;font-size:24px;line-height:36px;color:#c3cbd5;letter-spacing:0.401px;">data:application/fo…</span>
<span class="t ff-s" style="left:1284.40px;top:756.00px;font-size:24px;line-height:36px;color:#c3cbd5;letter-spacing:0.415px;">icomoon.ttf</span>
<span class="t ff-s" style="left:1284.40px;top:798.00px;font-size:24px;line-height:36px;color:#c3cbd5;letter-spacing:-0.024px;">player.json</span>
<span class="t ff-s" style="left:1284.40px;top:840.00px;font-size:24px;line-height:36px;color:#c3cbd5;letter-spacing:0.070px;">cast_framework.js</span>
<span class="t ff-s" style="left:1284.40px;top:882.00px;font-size:24px;line-height:36px;color:#c3cbd5;letter-spacing:-0.048px;">cast_sender.js</span>
<span class="t ff-s" style="left:1671.25px;top:501.00px;font-size:24px;line-height:36px;color:#e8eaed;letter-spacing:0.343px;">Accept-Language:</span>
<span class="t ff-s" style="left:1671.25px;top:541.00px;font-size:24px;line-height:36px;color:#e8eaed;letter-spacing:0.493px;">Cookie:</span>
<span class="t ff-s" style="left:1671.25px;top:901.00px;font-size:24px;line-height:36px;color:#e8eaed;letter-spacing:0.041px;">Referer:</span>
<span class="t ff-s" style="left:1671.25px;top:941.00px;font-size:24px;line-height:36px;color:#e8eaed;letter-spacing:0.495px;">Sec-Ch-Ua:</span>
<span class="t ff-s" style="left:1671.25px;top:981.00px;font-size:24px;line-height:36px;color:#e8eaed;letter-spacing:0.472px;">Sec-Ch-Ua-Mobile:</span>
<span class="t ff-s" style="left:1671.25px;top:1021.00px;font-size:24px;line-height:36px;color:#e8eaed;letter-spacing:0.377px;">Sec-Ch-Ua-Platform:</span>
<span class="t ff-s" style="left:1671.25px;top:1061.00px;font-size:24px;line-height:36px;color:#e8eaed;letter-spacing:0.390px;">Sec-Fetch-Dest:</span>
<span class="t ff-s" style="left:1671.25px;top:1101.00px;font-size:24px;line-height:36px;color:#e8eaed;letter-spacing:0.504px;">Sec-Fetch-Mode:</span>
<span class="t ff-s" style="left:1671.25px;top:1141.00px;font-size:24px;line-height:36px;color:#e8eaed;letter-spacing:0.390px;">Sec-Fetch-Site:</span>
<span class="t ff-s" style="left:1671.25px;top:1181.00px;font-size:24px;line-height:36px;color:#e8eaed;letter-spacing:0.222px;">Upgrade-Insecure-Requests:</span>
<span class="t ff-s" style="left:1671.25px;top:1221.00px;font-size:24px;line-height:36px;color:#e8eaed;letter-spacing:0.206px;">User-Agent:</span>
<span class="t ff-s" style="left:2015.40px;top:501.00px;font-size:24px;line-height:36px;color:#c5cdd7;letter-spacing:0.167px;">en-GB,en-US;q=0.9,en;q=0.8,ru;q=0.7</span>
<span class="t ff-s" style="left:2015.40px;top:541.00px;font-size:24px;line-height:36px;color:#c5cdd7;letter-spacing:-0.072px;">_hjSessionUser_2020448=eyJpZCI6ImM4NmE5NDFiLWQ4YzgtNTZkOC1iMjQ3LTgz</span>
<span class="t ff-s" style="left:2015.40px;top:581.00px;font-size:24px;line-height:36px;color:#c5cdd7;letter-spacing:-0.171px;">MDg3NDQyZDFhNyIsImNyZWF0ZWQiOjE2NzQ0NjUwODQyNDQsImV4aXN0aW5nIjp</span>
<span class="t ff-s" style="left:2015.40px;top:621.00px;font-size:24px;line-height:36px;color:#c5cdd7;letter-spacing:0.322px;">0cnVlfQ==;</span>
<span class="t ff-s" style="left:2015.40px;top:661.00px;font-size:24px;line-height:36px;color:#c5cdd7;">_hjSessionUser_2021228=eyJpZCI6Ijg1ZTdhYjY1LWI0MWItNWU1My1hMDQwLWM0</span>
<span class="t ff-s" style="left:2015.40px;top:701.00px;font-size:24px;line-height:36px;color:#c5cdd7;letter-spacing:-0.183px;">MDczN2Q1YTcwOSIsImNyZWF0ZWQiOjE2NzQ1NTQzNzQ1OTksImV4aXN0aW5nIjp0</span>
<span class="t ff-s" style="left:2015.40px;top:741.00px;font-size:24px;line-height:36px;color:#c5cdd7;letter-spacing:0.035px;">cnVlfQ==; _hjAbsoluteSessionInProgress=1;</span>
<span class="t ff-s" style="left:2015.40px;top:781.00px;font-size:24px;line-height:36px;color:#c5cdd7;letter-spacing:-0.109px;">_hjSession_2021228=eyJpZCI6ImZiNzQ1MGJhLWExZTUtNDg4OC1iYzVkLWU3NTEy</span>
<span class="t ff-s" style="left:2015.40px;top:821.00px;font-size:24px;line-height:36px;color:#c5cdd7;">ZjhmYjc3MSIsImNyZWF0ZWQiOjE2ODU3MjA1MDM0ODQsImluU2FtcGxlIjp0cnVlfQ=</span>
<span class="t ff-s" style="left:2015.40px;top:861.00px;font-size:24px;line-height:36px;color:#c5cdd7;">=</span>
<span class="t ff-s" style="left:2015.40px;top:901.00px;font-size:24px;line-height:36px;color:#c5cdd7;letter-spacing:0.486px;">https://some.domain.com</span>
<span class="t ff-s" style="left:2015.40px;top:941.00px;font-size:24px;line-height:36px;color:#c5cdd7;letter-spacing:0.466px;">"Google Chrome";v="113", "Chromium";v="113", "Not-A.Brand";v="24"</span>
<span class="t ff-s" style="left:2015.40px;top:981.00px;font-size:24px;line-height:36px;color:#c5cdd7;letter-spacing:1.096px;">?0</span>
<span class="t ff-s" style="left:2015.40px;top:1021.00px;font-size:24px;line-height:36px;color:#c5cdd7;letter-spacing:0.652px;">"macOS"</span>
<span class="t ff-s" style="left:2015.40px;top:1061.00px;font-size:24px;line-height:36px;color:#c5cdd7;letter-spacing:0.323px;">iframe</span>
<span class="t ff-s" style="left:2015.40px;top:1101.00px;font-size:24px;line-height:36px;color:#c5cdd7;letter-spacing:0.141px;">navigate</span>
<span class="t ff-s" style="left:2015.40px;top:1141.00px;font-size:24px;line-height:36px;color:#c5cdd7;letter-spacing:0.457px;">cross-site</span>
<span class="t ff-s" style="left:2015.40px;top:1181.00px;font-size:24px;line-height:36px;color:#c5cdd7;">1</span>
<span class="t ff-s" style="left:2015.40px;top:1221.00px;font-size:24px;line-height:36px;color:#c5cdd7;">Mozilla/5.0 (Macintosh; Intel Mac OS X 10_15_7) AppleWebKit/537.36 (KHTML, like</span>
<span class="t ff-s" style="left:2015.40px;top:1261.00px;font-size:24px;line-height:36px;color:#c5cdd7;letter-spacing:0.112px;">Gecko) Chrome/113.0.0.0 Safari/537.36</span>
<span class="t ff-s" style="left:1253.28px;top:1253.00px;font-size:24px;line-height:36px;color:#9aa0a6;letter-spacing:0.100px;">23 requests</span>
<span class="t ff-s" style="left:1417.00px;top:1253.00px;font-size:24px;line-height:36px;color:#9aa0a6;letter-spacing:0.170px;">305 kB transferred</span>
<span class="t ff-s" style="left:1306.97px;top:1309.00px;font-size:24px;line-height:36px;color:#9aa0a6;letter-spacing:0.221px;">Console</span>
<span class="t ff-s" style="left:1436.01px;top:1309.00px;font-size:24px;line-height:36px;color:#ffffff;letter-spacing:0.131px;">What's New</span>
<span class="t ff-s" style="left:1261.10px;top:1364.00px;font-size:24px;line-height:36px;color:#e8eaed;letter-spacing:0.228px;">Highlights from the Chrome 113 update</span>
<span class="t ff-r" style="left:9.00px;top:94.00px;font-size:71.5px;line-height:80px;color:#000;font-weight:bold;transform:scaleY(1.0213);transform-origin:0 64px;">Hello</span>
<span class="t ff-s" style="left:65.20px;top:529.00px;font-size:15px;line-height:22px;color:#767676;letter-spacing:0.198px;font-weight:bold;">MOVIECLIPS</span>
<span class="t ff-s" style="left:158.89px;top:535.00px;font-size:9.5px;line-height:14px;color:#666666;font-weight:bold;">.COM</span>
</div>
<svg id="annot" width="2938" height="1406" viewBox="0 0 2938 1406">
<g fill="none" stroke="#ff2600" stroke-width="5"><rect x="269.400" y="13.100" width="349.100" height="58.900"/><rect x="1661.500" y="891.500" width="648.500" height="48.800"/></g>
<g stroke="#ff2600" stroke-width="4.600" fill="#ff2600"><path d="M839.800 267.200L648 100"/><path d="M1452.800 758.700L1637 857.500"/></g>
<path fill="#ff2600" d="M630.200 83.900L656.800 91.400L640.300 109.600ZM1658 868.100L1642.400 846.700L1630.200 867.600Z"/>
</svg>
</body></html>
